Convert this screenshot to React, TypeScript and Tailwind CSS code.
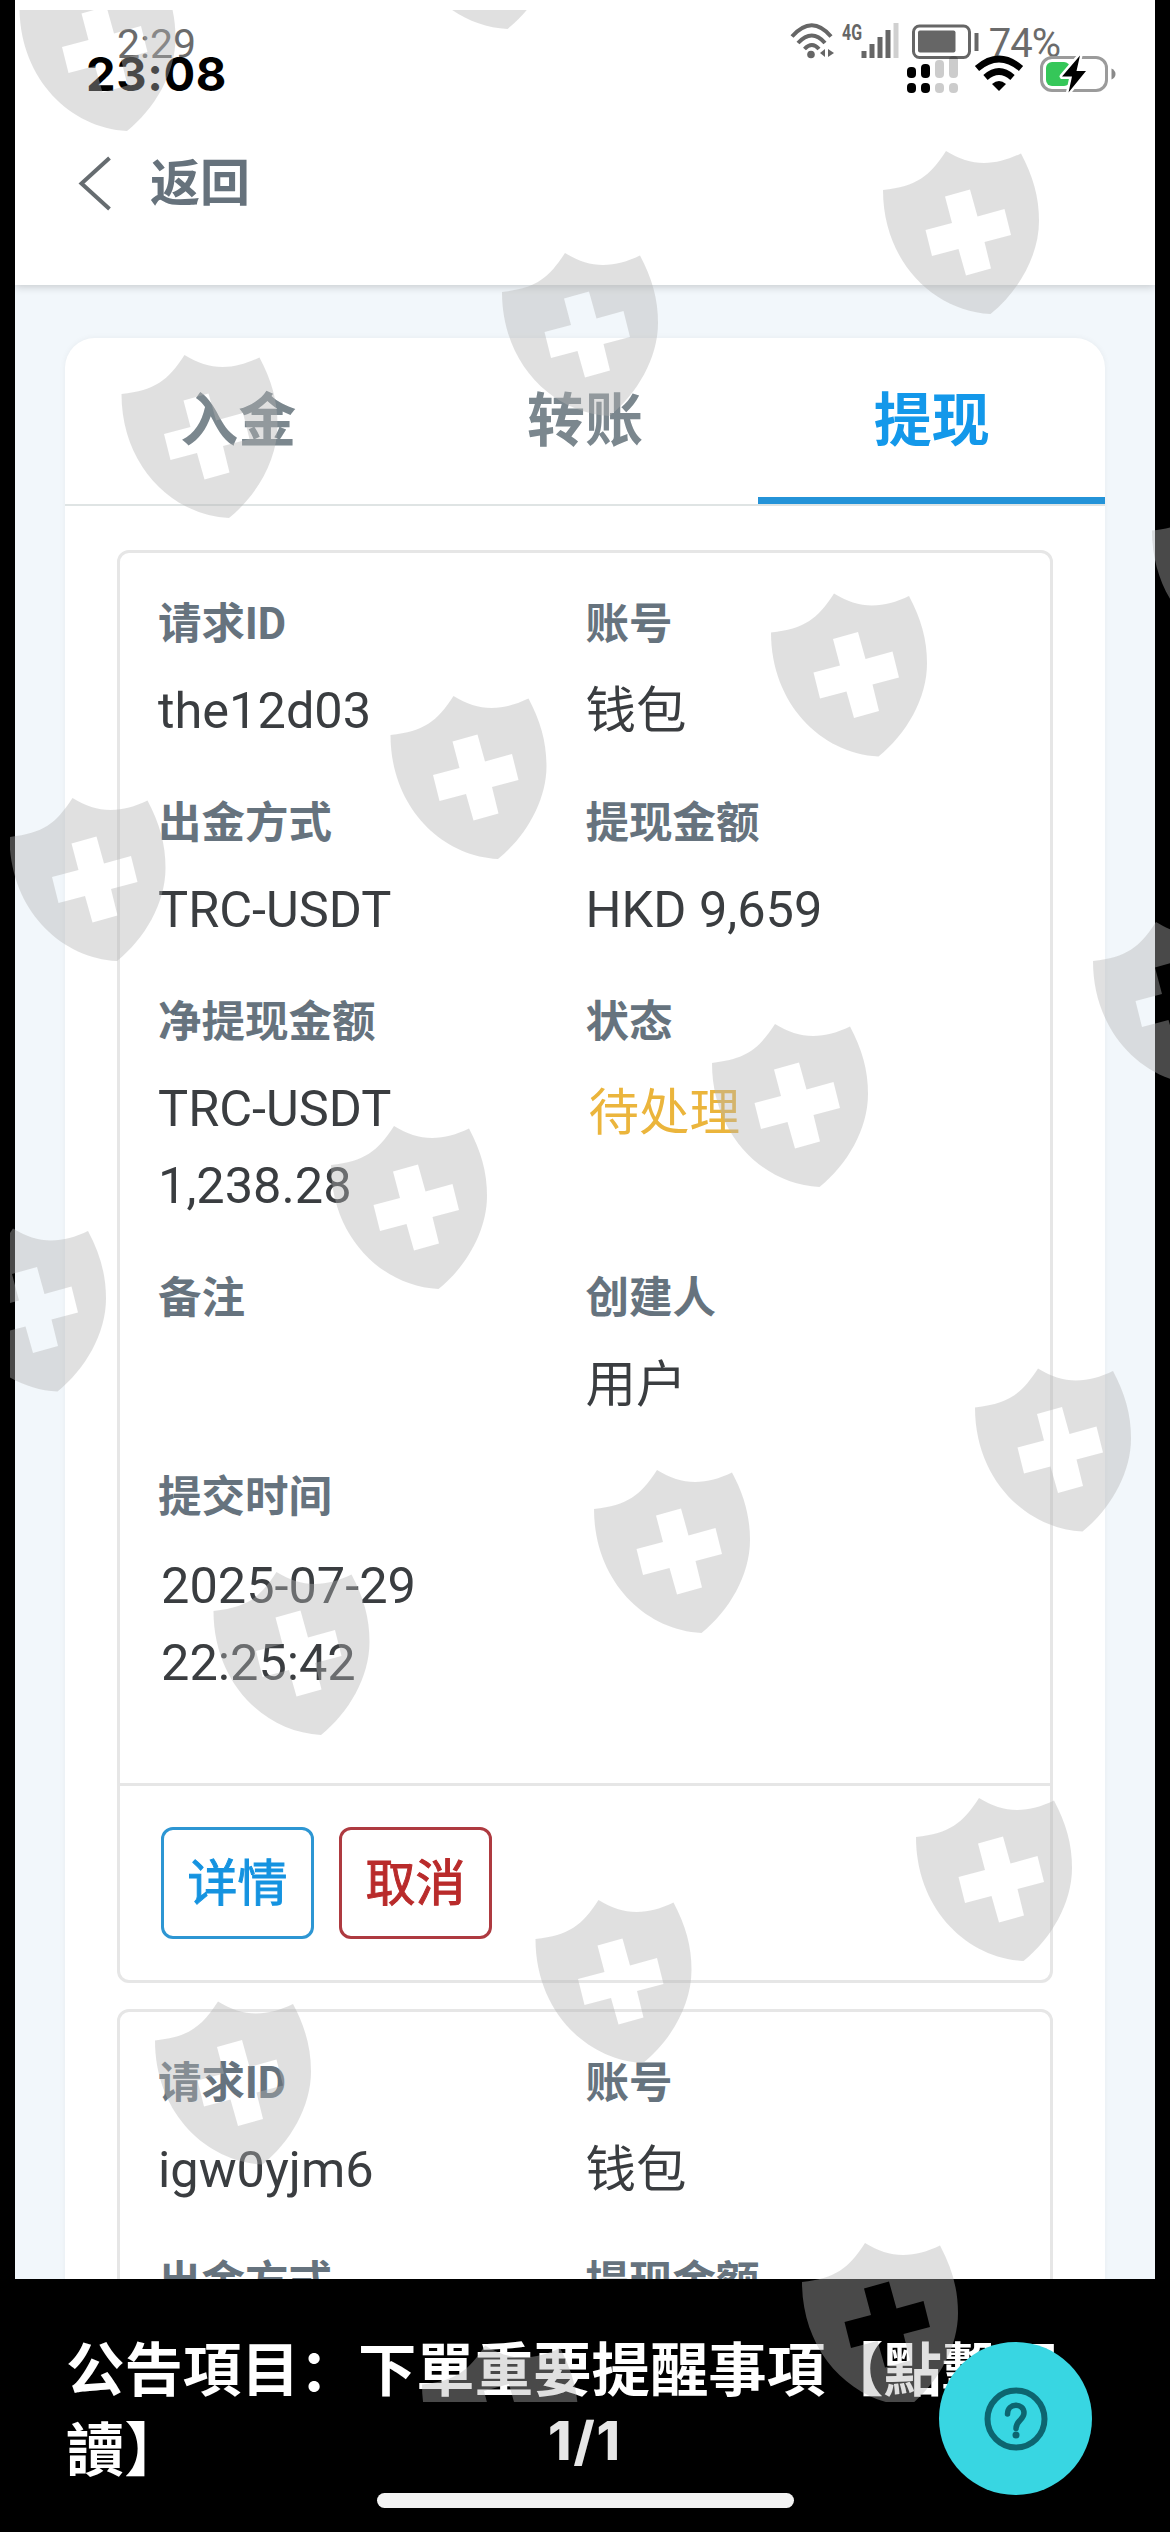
import type { ReactNode } from "react";

type Field = { label: string; value: ReactNode };

const REQUESTS: { id: string; fields: Field[] }[] = [
  {
    id: "the12d03",
    fields: [
      { label: "请求ID", value: "the12d03" },
      { label: "账号", value: "钱包" },
      { label: "出金方式", value: "TRC-USDT" },
      { label: "提现金额", value: "HKD 9,659" },
      { label: "净提现金额", value: <>TRC-USDT<br />1,238.28</> },
      { label: "状态", value: <span className="block pl-[3px] pt-[4px] text-[#ebb53c]">待处理</span> },
      { label: "备注", value: "" },
      { label: "创建人", value: "用户" },
      { label: "提交时间", value: <span className="block pl-[3px] pt-[2px]">2025-07-29<br />22:25:42</span> },
    ],
  },
  {
    id: "igw0yjm6",
    fields: [
      { label: "请求ID", value: "igw0yjm6" },
      { label: "账号", value: "钱包" },
      { label: "出金方式", value: "" },
      { label: "提现金额", value: "" },
    ],
  },
];

const TABS = ["入金", "转账", "提现"];

// left / top of every shield in the watermark
const SHIELDS = [
  [19.5, -32], [400, -134],
  [883, 151], [502, 253], [121.5, 355],
  [1152, 491.5], [771, 593.5], [390.5, 696], [9.5, 798],
  [1093, 922], [712, 1024], [331, 1126], [-50, 1228.5],
  [975, 1368.5], [594, 1470], [213.5, 1572],
  [916, 1798], [535.5, 1900], [155, 2001.5],
  [802, 2243], [422, 2345.5],
];

function Watermark() {
  return (
    <svg className="absolute inset-0 pointer-events-none" width="1170" height="2532" viewBox="0 0 1170 2532">
      <defs>
        <clipPath id="wm">
          <rect x="10" y="10" width="1160" height="2392" />
        </clipPath>
        <path
          id="shield"
          fillRule="evenodd"
          d="M0 39C34 35 46 26 63 0C76 8 88 12 101 12C114 12 125 8.500 138 2.500C150 25 156 46 156 70C156 105 135 141 107.500 163C50 160 0 110 0 39Z
             M62 45.500L69 72L42.500 79L49 105L75.500 98L83 124.500L108 117.500L101.500 91L128 84L121.500 58L94.500 65.500L87 38.500Z"
        />
      </defs>
      <g clipPath="url(#wm)" fill="#b3b3b3" fillOpacity="0.408">
        {SHIELDS.map(([x, y]) => (
          <use key={`${x}-${y}`} href="#shield" x={x} y={y} />
        ))}
      </g>
    </svg>
  );
}

function AndroidStatus() {
  return (
    <div className="flex h-[86px] justify-between pl-[102px] pr-[95px] text-[#6b6b6b]">
      <span className="pt-[21px] text-[41px] leading-[46px]">2:29</span>
      <div className="flex pt-[20px]">
        <svg width="200" height="42" viewBox="787 20 200 42" fill="none" stroke="#666">
          <path d="M790 36.500Q810 14 829 36.500M796 43Q810 28 823 43M802.500 49Q810 41 817 49" strokeWidth="4" />
          <circle cx="809" cy="54.500" r="3.800" fill="#666" stroke="none" />
          <path d="M823 49v8l-5-4zM826 49v8l6-4z" fill="#666" stroke="none" />
          <text x="840" y="40" fill="#666" stroke="none" fontSize="22" fontWeight="700" textLength="20" lengthAdjust="spacingAndGlyphs">4G</text>
          <path d="M862 51v7M870 44v14M878 37v21M886 30v28" strokeWidth="5" />
          <path d="M894 23v35" stroke="#d0d0d0" strokeWidth="5" />
          <rect x="911.500" y="26" width="56" height="31.500" rx="6" strokeWidth="3" />
          <rect x="916" y="30.500" width="37.500" height="22" rx="2" fill="#666" stroke="none" />
          <path d="M974.500 33v18" strokeWidth="4" />
        </svg>
        <span className="pt-[1px] text-[40px] leading-[46px] tracking-[-1px]">74%</span>
      </div>
    </div>
  );
}

function IosStatus() {
  return (
    <div className="absolute inset-x-0 top-[46px] flex h-[56px] items-center justify-between pl-[86px] pr-[53px]">
      <span className="font-['Inter'] text-[47px] font-bold leading-[56px] tracking-[0.6px] text-black">23:08</span>
      <svg width="212" height="44" viewBox="905 52 212 44">
        <g fill="#000">
          <rect x="907" y="67" width="9" height="11" rx="4" />
          <rect x="921" y="64" width="9" height="14" rx="4" />
          <rect x="907" y="83" width="9" height="10" rx="4" />
          <rect x="921" y="83" width="9" height="10" rx="4" />
        </g>
        <g fill="#000" fillOpacity="0.2">
          <rect x="935" y="60" width="9" height="18" rx="4" />
          <rect x="949" y="56" width="9" height="22" rx="4" />
          <rect x="935" y="83" width="9" height="10" rx="4" />
          <rect x="949" y="83" width="9" height="10" rx="4" />
        </g>
        <g fill="none" stroke="#000" strokeWidth="6.500">
          <path d="M977 68.500Q999 49.500 1021 68.500" />
          <path d="M985.500 77.500Q999 65.500 1012.500 77.500" />
        </g>
        <path d="M992 84Q999 78 1006 84L999 91Z" />
        <rect x="1041.500" y="57.500" width="65" height="33" rx="10.500" fill="none" stroke="#9b9b9b" strokeWidth="3" />
        <rect x="1046" y="62" width="24" height="24" rx="6" fill="#35c759" />
        <path d="M1111.500 68.500v11q4-2 4-5.500t-4-5.500z" fill="#8a8a8a" />
        <path d="M1080 55.500L1062 76.500H1072L1068.500 92.500L1086 71H1076.500Z" fill="#000" stroke="#fff" strokeWidth="5" paintOrder="stroke" strokeLinejoin="round" />
      </svg>
    </div>
  );
}

function RequestCard({ fields, children }: { fields: Field[]; children?: ReactNode }) {
  return (
    <div className="rounded-[12px] border-[3px] border-[#e6e6e6]">
      <div className="grid grid-cols-2 gap-y-[42px] pt-[39px] pb-[82px] pl-[38px] pr-[37px]">
        {fields.map((f) => (
          <div key={f.label}>
            <div className="text-[43.500px] font-bold leading-[65px] text-[#66737e]">{f.label}</div>
            <div className="mt-[15px] min-h-[77px] text-[50.500px] leading-[77px] text-[#3a3d40]">{f.value}</div>
          </div>
        ))}
      </div>
      {children}
    </div>
  );
}

export default function App() {
  return (
    <div className="relative h-[2532px] w-[1170px] overflow-hidden bg-black font-['Roboto','Noto_Sans_CJK_SC',sans-serif]">
      <div className="isolate mx-[15px] flex h-full flex-col">
        {/* Header */}
        <header className="z-10 h-[285px] shrink-0 bg-white shadow-[0_2px_8px_rgba(0,0,0,0.18)]">
          <AndroidStatus />
          <div className="flex items-center gap-[38px] pl-[63px] pt-[60px]">
            <svg width="34" height="56" viewBox="0 0 34 56" fill="none" stroke="#666c70" strokeWidth="4">
              <path d="M31.500 3L3.500 28.500L31.500 54" />
            </svg>
            <h1 className="pt-[3px] text-[50px] font-bold leading-[71px] text-[#66727c]">返回</h1>
          </div>
        </header>

        {/* Content */}
        <main className="min-h-0 flex-1 overflow-hidden bg-[#f2f7fb] px-[50px] pt-[53px]">
          <div className="h-[2100px] rounded-t-[30px] bg-white shadow-[0_0_6px_rgba(0,0,0,0.05)]">
            <nav className="flex h-[168px] border-b-2 border-[#dfe4e4]">
              {TABS.map((tab) => {
                const active = tab === "提现";
                return (
                  <div
                    key={tab}
                    className={`flex flex-1 items-center justify-center border-y-[7px] border-t-transparent text-[58px] font-bold ${
                      active ? "border-b-[#2493d8] text-[#1398ea]" : "border-b-transparent text-[#7b878e]"
                    }`}
                  >
                    {tab}
                  </div>
                );
              })}
            </nav>

            <div className="flex flex-col gap-[26px] px-[52px] pt-[44px]">
              <RequestCard fields={REQUESTS[0].fields}>
                <div className="flex gap-[25px] border-t-[3px] border-[#e6e6e6] px-[41px] py-[41px]">
                  <button className="h-[112px] w-[153px] rounded-[12px] border-[3px] border-[#2d96d3] pt-[3px] text-[50px] text-[#1593e0] [-webkit-text-stroke:1px]">
                    详情
                  </button>
                  <button className="h-[112px] w-[153px] rounded-[12px] border-[3px] border-[#ae3a40] pt-[3px] text-[50px] text-[#b92b2b] [-webkit-text-stroke:1px]">
                    取消
                  </button>
                </div>
              </RequestCard>
              <RequestCard fields={REQUESTS[1].fields} />
            </div>
          </div>
        </main>

        {/* Announcement */}
        <footer className="z-10 h-[253px] shrink-0 bg-black pl-[51px] pr-[40px] pt-[47px]">
          <p className="font-['Noto_Sans_CJK_SC',sans-serif] text-[58.400px] font-bold leading-[80px] text-white">
            公告項目：下單重要提醒事項【點擊閱
            <br />
            讀】
          </p>
        </footer>
      </div>

      <IosStatus />
      <Watermark />

      {/* Pager, help button and home indicator float over the announcement */}
      <div className="absolute inset-x-0 bottom-[56px] text-center font-['Inter'] text-[53px] font-extrabold leading-[70px] tracking-[2px] text-[#e6e6e6]">
        1/1
      </div>
      <button className="absolute bottom-[37px] right-[78px] flex size-[153px] items-center justify-center rounded-full bg-[#38d6e2]">
        <svg width="64" height="64" viewBox="0 0 64 64" fill="none" stroke="#0d6570">
          <circle cx="32" cy="32" r="28.500" strokeWidth="6" />
          <path d="M23.500 27C23.500 15.500 40 15.500 40 26C40 33 32 33 32 41.500" strokeWidth="5.500" strokeLinecap="round" />
          <circle cx="32" cy="48" r="3.500" fill="#0d6570" stroke="none" />
        </svg>
      </button>
      <div className="absolute bottom-[24px] left-[377px] h-[15px] w-[417px] rounded-full bg-[#f3f3f3]" />
    </div>
  );
}
